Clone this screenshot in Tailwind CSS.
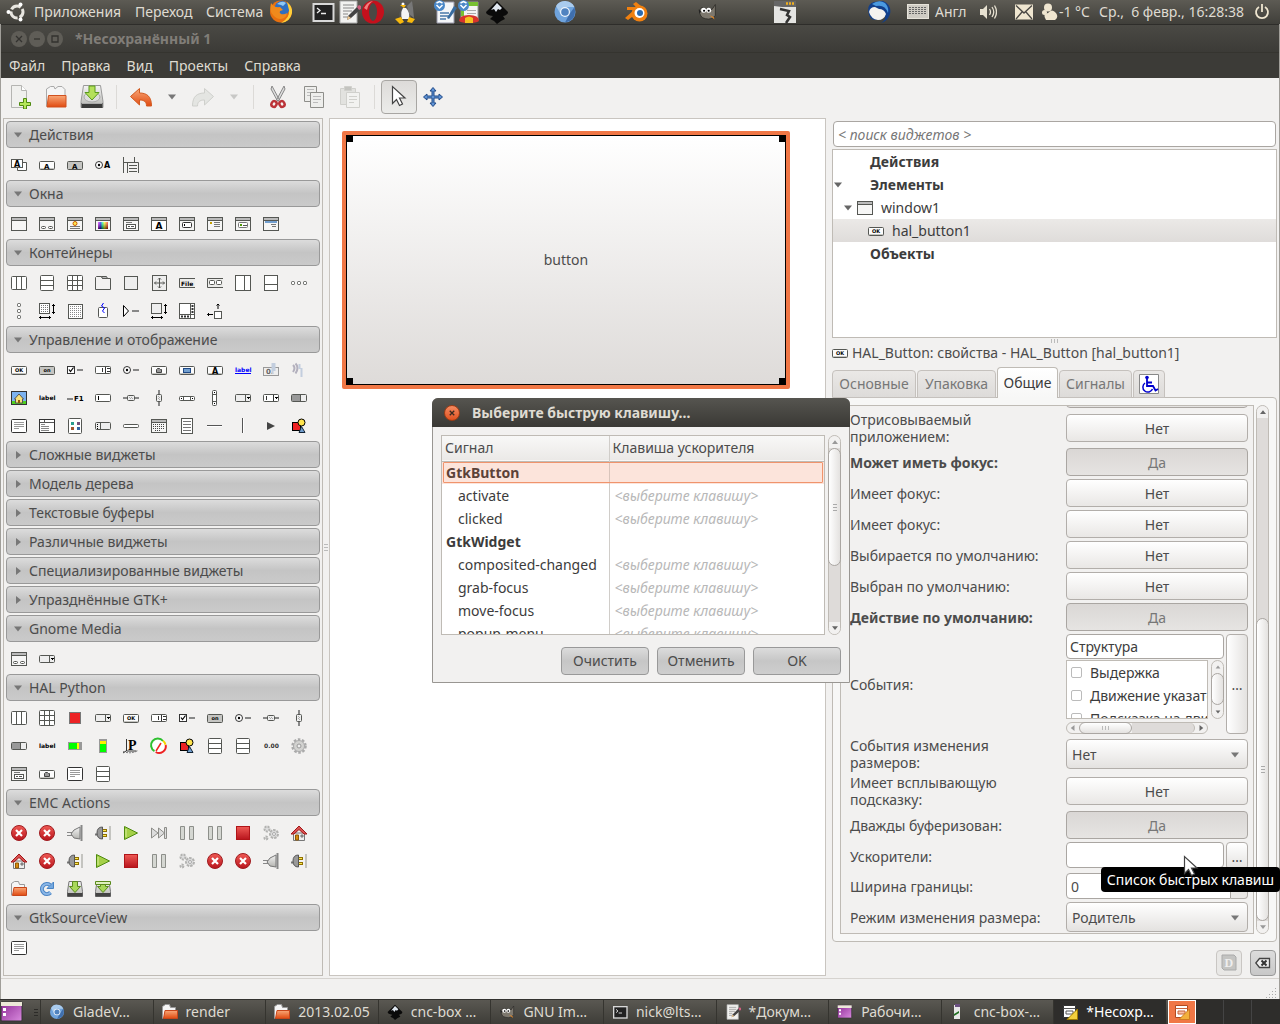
<!DOCTYPE html>
<html lang="ru">

<head>
    <meta charset="UTF-8">
    <meta name="viewport" content="width=device-width, initial-scale=1.0">
    <title>*Несохранённый 1</title>
    <script src="https://cdn.jsdelivr.net/npm/@tailwindcss/browser@4"></script>
</head>

<body class="relative flex h-screen min-h-[720px] flex-col overflow-hidden bg-[#f2f1f0] font-['Noto_Sans','Open_Sans',sans-serif] text-sm text-[#4c4c4c]">
    <!-- shared gradients and icon parts -->
    <svg class="absolute size-0" aria-hidden="true">
        <defs>
            <linearGradient id="rainbow"><stop offset="0" stop-color="#f0f"/><stop offset=".25" stop-color="#00f"/><stop offset=".45" stop-color="#0f8"/><stop offset=".65" stop-color="#ff0"/><stop offset="1" stop-color="#f00"/></linearGradient>
            <linearGradient id="dark" x2="0" y2="1"><stop offset="0" stop-color="#fff" stop-opacity=".4"/><stop offset="1" stop-color="#000" stop-opacity=".6"/></linearGradient>
            <linearGradient id="orange" x2="0" y2="1"><stop offset="0" stop-color="#f9a878"/><stop offset="1" stop-color="#e04a10"/></linearGradient>
            <linearGradient id="red" x2="0" y2="1"><stop offset="0" stop-color="#ef5a55"/><stop offset="1" stop-color="#b8141c"/></linearGradient>
            <linearGradient id="metal" x2="0" y2="1"><stop offset="0" stop-color="#f4f4f4"/><stop offset="1" stop-color="#b4b4b0"/></linearGradient>
            <linearGradient id="purple" x2="1" y2="1"><stop offset="0" stop-color="#8c2a94"/><stop offset="1" stop-color="#d98ade"/></linearGradient>
            <g id="win"><rect x=".5" y="1.5" width="15" height="13" fill="#f6f6f5" stroke="#555753"/><path d="M1 3h14" stroke="#bbb" stroke-width="2"/><path d="M1 4.5h14" stroke="#555753"/></g>
            <g id="btn"><rect x=".5" y="4.5" width="15" height="8" rx="1" fill="#fcfcfc" stroke="#555753"/><path d="M1 11.500h14" stroke="#c4c4c0"/></g>
            <g id="btnon"><rect x=".5" y="4.500" width="15" height="8" rx="1" fill="#c5c5c2" stroke="#555753"/></g>
            <g id="rows"><rect x="1.500" y=".5" width="13" height="15" rx="1" fill="#fff" stroke="#555753"/><path d="M2 5.500h12M2 10.500h12" stroke="#555753"/></g>
        </defs>
    </svg>

    <template id="icons"><svg>
        <!-- palette: actions -->
        <symbol id="action-group" viewBox="0 0 16 16"><path d="M4.500 5.500h11v8h-9v-3" fill="#fff" stroke="#555753"/><rect x=".5" y="2.500" width="11" height="8" fill="#fff" stroke="#555753"/><text x="3" y="9.500" font-size="8" font-weight="900">A</text></symbol>
        <symbol id="action" viewBox="0 0 16 16"><use href="#btn"/><text x="5" y="11.500" font-size="7" font-weight="900">A</text></symbol>
        <symbol id="toggle-action" viewBox="0 0 16 16"><use href="#btnon"/><text x="5" y="11.500" font-size="7" font-weight="900">A</text></symbol>
        <symbol id="radio-action" viewBox="0 0 16 16"><circle cx="4" cy="8" r="3.500" fill="#fff" stroke="#333"/><circle cx="4" cy="8" r="1.200"/><text x="9" y="11" font-size="8" font-weight="900">A</text></symbol>
        <symbol id="recent-action" viewBox="0 0 16 16"><path d="M.5 0v16M11.500 0v5M0 5.500h5M4.500 5.500h11V16M4.500 5.500V16M6 8.500h8M6 11.500h8M6 14.500h8" fill="none" stroke="#555753"/></symbol>

        <!-- palette: windows -->
        <symbol id="window" viewBox="0 0 16 16"><use href="#win"/></symbol>
        <symbol id="dialog" viewBox="0 0 16 16"><use href="#win"/><rect x="2.500" y="10.500" width="4" height="2" rx="1" fill="#fff" stroke="#555753"/><rect x="9.500" y="10.500" width="4" height="2" rx="1" fill="#fff" stroke="#555753"/></symbol>
        <symbol id="about" viewBox="0 0 16 16"><use href="#win"/><circle cx="8" cy="7.500" r="2" fill="#fce94f" stroke="#ce5c00"/><path d="M3 10.500h10M3 12.500h10" stroke="#777"/></symbol>
        <symbol id="color-dialog" viewBox="0 0 16 16"><use href="#win"/><rect x="3" y="6" width="10" height="7" fill="url(#rainbow)"/><rect x="3" y="6" width="10" height="7" fill="url(#dark)"/></symbol>
        <symbol id="file-dialog" viewBox="0 0 16 16"><use href="#win"/><path d="M3 6.500h6" stroke="#777"/><rect x="3.500" y="8.500" width="9" height="4" fill="#fff" stroke="#555753"/><path d="M5 10.500h2M8 10.500h3" stroke="#555"/></symbol>
        <symbol id="font-dialog" viewBox="0 0 16 16"><use href="#win"/><rect x="1" y="5" width="14" height="9" fill="#fff"/><text x="4.500" y="13" font-size="9" font-weight="900">A</text></symbol>
        <symbol id="input-dialog" viewBox="0 0 16 16"><use href="#win"/><rect x="3.500" y="6.500" width="9" height="5" rx="1" fill="#fff" stroke="#333"/><path d="M5.500 8v2" stroke="#000"/></symbol>
        <symbol id="message-dialog" viewBox="0 0 16 16"><use href="#win"/><rect x="3" y="6" width="2" height="2" fill="#c4a000"/><path d="M7 6.500h6M7 8.500h6M7 10.500h6" stroke="#777"/></symbol>
        <symbol id="recent-dialog" viewBox="0 0 16 16"><use href="#win"/><rect x="3.500" y="6.500" width="9" height="5" rx="1" fill="#fff" stroke="#777"/><rect x="5" y="8" width="2" height="2" fill="#4e9a06"/><path d="M8 9.500h4" stroke="#555"/></symbol>
        <symbol id="assistant" viewBox="0 0 16 16"><use href="#win"/><path d="M2 6h12" stroke="#729fcf" stroke-width="2"/><path d="M8 8.500h5M9 10.500h4" stroke="#777"/></symbol>

        <!-- palette: containers -->
        <symbol id="hbox" viewBox="0 0 16 16"><rect x=".5" y="1.500" width="15" height="13" rx="1" fill="#fff" stroke="#555753"/><path d="M5.500 2v12M10.500 2v12" stroke="#555753"/></symbol>
        <symbol id="vbox" viewBox="0 0 16 16"><use href="#rows"/></symbol>
        <symbol id="grid" viewBox="0 0 16 16"><rect x=".5" y=".5" width="15" height="15" rx="1" fill="#fff" stroke="#555753"/><path d="M5.500 1v14M10.500 1v14M1 5.500h14M1 10.500h14" stroke="#555753"/></symbol>
        <symbol id="notebook" viewBox="0 0 16 16"><path d="M.5 14.500v-12l1-1h5l1 2h8v11z" fill="#f2f1f0" stroke="#555753"/><path d="M6.500 1.500h5l1 2h-5z" fill="#bbb" stroke="#555753"/></symbol>
        <symbol id="frame" viewBox="0 0 16 16"><rect x="1.500" y="1.500" width="13" height="13" fill="#eee" stroke="#555753"/></symbol>
        <symbol id="aspect" viewBox="0 0 16 16"><rect x="1.500" y=".5" width="14" height="15" fill="#eee" stroke="#555753"/><path d="M8.500 3v10M3.500 8h10M7 4.500l1.500-1.500L10 4.500M7 11.500l1.500 1.500 1.500-1.500M5 6.500L3.500 8 5 9.500M12 6.500L13.500 8 12 9.500" fill="none" stroke="#555753"/></symbol>
        <symbol id="menubar" viewBox="0 0 16 16"><path d="M16 3.500H.5v9H16" fill="#ececea" stroke="#555753"/><text x="2" y="10.500" font-size="6" font-weight="bold">File</text></symbol>
        <symbol id="toolbar" viewBox="0 0 16 16"><path d="M16 3.500H.5v9H16" fill="#ececea" stroke="#555753"/><rect x="2.500" y="5.500" width="5" height="4" rx="1" fill="#fff" stroke="#555753"/><rect x="9.500" y="5.500" width="5" height="4" rx="1" fill="#fff" stroke="#555753"/></symbol>
        <symbol id="hpaned" viewBox="0 0 16 16"><rect x=".5" y=".5" width="15" height="15" fill="#fff" stroke="#555753"/><path d="M9.500 1v14" stroke="#555753"/></symbol>
        <symbol id="vpaned" viewBox="0 0 16 16"><rect x="1.500" y=".5" width="13" height="15" fill="#fff" stroke="#555753"/><path d="M2 9.500h12" stroke="#555753"/></symbol>
        <symbol id="hbuttons" viewBox="0 0 16 16"><g fill="#fff" stroke="#555753"><rect x=".5" y="6.500" width="3" height="3" rx="1"/><rect x="6.500" y="6.500" width="3" height="3" rx="1"/><rect x="12.500" y="6.500" width="3" height="3" rx="1"/></g></symbol>
        <symbol id="vbuttons" viewBox="0 0 16 16"><g fill="#fff" stroke="#555753"><rect x="6.500" y=".5" width="3" height="3" rx="1"/><rect x="6.500" y="6.500" width="3" height="3" rx="1"/><rect x="6.500" y="12.500" width="3" height="3" rx="1"/></g></symbol>
        <symbol id="layout" viewBox="0 0 16 16"><rect x=".5" y=".5" width="10" height="10" fill="#fff" stroke="#555753"/><path d="M2 2.500h8M2 4.500h8M2 6.500h8M2 8.500h8" stroke="#777" stroke-dasharray="1 1"/><path d="M14.500 1v10M0 14.500h12M13 2.500h3M13 9.500h3M1.500 13v3M10.500 13v3" stroke="#000"/></symbol>
        <symbol id="fixed" viewBox="0 0 16 16"><rect x="1.500" y="1.500" width="14" height="14" fill="#fff" stroke="#555753"/><path d="M3 3.500h11M3 5.500h11M3 7.500h11M3 9.500h11M3 11.500h11M3 13.500h11" stroke="#888" stroke-dasharray="1 1"/></symbol>
        <symbol id="eventbox" viewBox="0 0 16 16"><rect x="3.500" y="4.500" width="9" height="10" rx="1" fill="#fff" stroke="#555753"/><path d="M8.500 0L6.500 3l3 2-2 3 2 2" fill="none" stroke="#00f"/></symbol>
        <symbol id="expander" viewBox="0 0 16 16"><path d="M.5 2.500v11l5-5.500z" fill="#fff" stroke="#000"/><path d="M9 8h7" stroke="#888" stroke-width="2"/></symbol>
        <symbol id="viewport" viewBox="0 0 16 16"><rect x=".5" y=".5" width="10" height="10" fill="#eee" stroke="#555753"/><path d="M14.500 1v10M0 14.500h12M13 2.500h3M13 9.500h3M1.500 13v3M10.500 13v3" stroke="#000"/></symbol>
        <symbol id="scrolled" viewBox="0 0 16 16"><rect x=".5" y=".5" width="15" height="15" fill="#fff" stroke="#555753"/><path d="M11.500 1v15M1 11.500h15" stroke="#555753"/><path d="M13.500 2v9M2 13.500h9" stroke="#333" stroke-width="2" stroke-dasharray="2 1"/></symbol>
        <symbol id="alignment" viewBox="0 0 16 16"><rect x="7.500" y="8.500" width="7" height="7" fill="#fff" stroke="#555753"/><path d="M11 6V1M9.500 2.500L11 1l1.500 1.500M6 11.500H.5M2 10L.5 11.500 2 13" fill="none" stroke="#000"/></symbol>

        <!-- palette: controls -->
        <symbol id="ok" viewBox="0 0 16 16"><use href="#btn"/><text x="8" y="10" text-anchor="middle" font-size="5" font-weight="900">OK</text></symbol>
        <symbol id="on" viewBox="0 0 16 16"><use href="#btnon"/><text x="8" y="10" text-anchor="middle" font-size="5" font-weight="900">on</text></symbol>
        <symbol id="check" viewBox="0 0 16 16"><rect x=".5" y="4.500" width="7" height="7" fill="#fff" stroke="#333"/><path d="M2 7.500l1.500 2L6.500 5.500" fill="none" stroke="#000" stroke-width="1.200"/><path d="M10 8h6" stroke="#888" stroke-width="2"/></symbol>
        <symbol id="spin" viewBox="0 0 16 16"><rect x=".5" y="4.500" width="15" height="7" rx="1" fill="#fff" stroke="#555753"/><path d="M10.500 5v6M7.500 6v4M12 6.500h3M12 9.500h3" stroke="#333"/></symbol>
        <symbol id="radio" viewBox="0 0 16 16"><circle cx="4" cy="8" r="3.500" fill="#fff" stroke="#333"/><circle cx="4" cy="8" r="1.200"/><path d="M10 8h6" stroke="#888" stroke-width="2"/></symbol>
        <symbol id="file-button" viewBox="0 0 16 16"><use href="#btn"/><path d="M5.500 10.500v-3l1-1h2l1 1h1v3z" fill="#999" stroke="#444"/></symbol>
        <symbol id="color-button" viewBox="0 0 16 16"><use href="#btn"/><rect x="4.500" y="6.500" width="7" height="4" fill="#729fcf" stroke="#204a87"/></symbol>
        <symbol id="font-button" viewBox="0 0 16 16"><use href="#btn"/><text x="5" y="11.500" font-size="8" font-weight="900">A</text></symbol>
        <symbol id="link" viewBox="0 0 16 16"><text x="0" y="10" font-size="6" font-weight="900" fill="#00f">label</text><path d="M0 11.500h16" stroke="#00f"/></symbol>
        <symbol id="scale-button" viewBox="0 0 16 16"><rect x=".5" y="5.500" width="15" height="8" fill="#eee" stroke="#999"/><text x="3" y="12" font-size="7" font-weight="bold" fill="#666">0.</text><path d="M9.500 1v11M11.500 1v8" stroke="#c3cede" stroke-width="2"/></symbol>
        <symbol id="volume-button" viewBox="0 0 16 16"><path d="M2 3q3 3 0 7M4.500 1.500q4 4 0 10" fill="none" stroke="#b3b0bd" stroke-width="2"/><path d="M10.500 6v9M8.500 2v5" stroke="#c3cede" stroke-width="2"/></symbol>
        <symbol id="image" viewBox="0 0 16 16"><rect x=".5" y="1.500" width="15" height="13" fill="#7cb2ef" stroke="#333"/><path d="M1 11h14v3H1z" fill="#4ed01e"/><path d="M3.500 9L8 4l4.500 5h-1v4h-7V9z" fill="#f7e17c" stroke="#555"/><path d="M7 10h2v3H7z" fill="#8f5902"/></symbol>
        <symbol id="label" viewBox="0 0 16 16"><text x="0" y="10" font-size="6" font-weight="900" fill="#000">label</text></symbol>
        <symbol id="accel-label" viewBox="0 0 16 16"><path d="M0 9h6" stroke="#888" stroke-width="2"/><text x="7" y="11" font-size="7" font-weight="900" fill="#000">F1</text></symbol>
        <symbol id="entry" viewBox="0 0 16 16"><rect x=".5" y="4.500" width="15" height="7" rx="1" fill="#fff" stroke="#555753"/><path d="M3.500 6v4" stroke="#000"/></symbol>
        <symbol id="hscale" viewBox="0 0 16 16"><path d="M0 8h16" stroke="#888" stroke-width="2"/><rect x="4.500" y="5.500" width="7" height="5" rx="1" fill="#eee" stroke="#555753"/><path d="M6 7.500h4M7 8.500h3" stroke="#aaa" stroke-dasharray="1 1"/></symbol>
        <symbol id="vscale" viewBox="0 0 16 16"><path d="M8 0v16" stroke="#888" stroke-width="2"/><rect x="5.500" y="4.500" width="5" height="7" rx="1" fill="#eee" stroke="#555753"/><path d="M7.500 6v4M8.500 7v3" stroke="#aaa" stroke-dasharray="1 1"/></symbol>
        <symbol id="hscroll" viewBox="0 0 16 16"><rect x=".5" y="6.500" width="15" height="4" rx="1" fill="#fff" stroke="#555753"/><path d="M4.500 7v3M11.500 7v3" stroke="#555753"/><path d="M2 8.500h1M13 8.500h1" stroke="#000"/></symbol>
        <symbol id="vscroll" viewBox="0 0 16 16"><rect x="5.500" y=".5" width="4" height="15" rx="1" fill="#fff" stroke="#555753"/><path d="M6 4.500h3M6 11.500h3" stroke="#555753"/><path d="M7.500 2v1M7.500 13v1" stroke="#000"/></symbol>
        <symbol id="combo" viewBox="0 0 16 16"><rect x=".5" y="4.500" width="15" height="7" rx="1" fill="#eee" stroke="#555753"/><path d="M10.500 5v6" stroke="#555753"/><path d="M12 7.500h3M13 8.500h1" stroke="#000"/></symbol>
        <symbol id="combo-entry" viewBox="0 0 16 16"><rect x=".5" y="4.500" width="15" height="7" rx="1" fill="#fff" stroke="#555753"/><path d="M10.500 5v6M3.500 6v4" stroke="#333"/><path d="M12 7.500h3M13 8.500h1" stroke="#000"/></symbol>
        <symbol id="progress" viewBox="0 0 16 16"><rect x=".5" y="4.500" width="15" height="7" rx="1" fill="#eee" stroke="#555753"/><path d="M1 5h8v6H1z" fill="#999"/><path d="M9.500 5v6" stroke="#555753"/></symbol>
        <symbol id="textview" viewBox="0 0 16 16"><rect x=".5" y="1.500" width="15" height="13" rx="1" fill="#fff" stroke="#333"/><path d="M3 4.500h10M3 6.500h10M3 8.500h10M3 10.500h5" stroke="#999"/></symbol>
        <symbol id="treeview" viewBox="0 0 16 16"><rect x=".5" y="1.500" width="15" height="13" fill="#fff" stroke="#333"/><path d="M1 4.500h14M5.500 2v3" stroke="#555"/><path d="M2 6.500h4M2 8.500h8M2 10.500h8M2 12.500h8" stroke="#888"/></symbol>
        <symbol id="iconview" viewBox="0 0 16 16"><rect x="1.500" y=".5" width="13" height="15" rx="1" fill="#fff" stroke="#555753"/><path d="M4 4h3v3H4z" fill="#2a9d8f"/><path d="M10 4h3v3h-3z" fill="#75507b"/><path d="M4 9h3v3H4z" fill="#a0522d"/><path d="M10 9h3v3h-3z" fill="#3465a4"/></symbol>
        <symbol id="handle" viewBox="0 0 16 16"><rect x=".5" y="4.500" width="15" height="7" rx="1" fill="#eee" stroke="#555753"/><path d="M5.500 5v6" stroke="#555753"/><path d="M2.500 6v5" stroke="#000" stroke-dasharray="1 1"/></symbol>
        <symbol id="statusbar" viewBox="0 0 16 16"><rect x=".5" y="6.500" width="15" height="3" rx="1" fill="#fff" stroke="#555753"/></symbol>
        <symbol id="calendar" viewBox="0 0 16 16"><use href="#win"/><path d="M2 6.500h12M2 8.500h12M2 10.500h12M4 12.500h6" stroke="#444" stroke-dasharray="1 1"/></symbol>
        <symbol id="list" viewBox="0 0 16 16"><rect x="2.500" y=".5" width="11" height="15" fill="#fff" stroke="#555753"/><path d="M4 3.500h8M4 6.500h8M4 9.500h8M4 12.500h8" stroke="#777"/></symbol>
        <symbol id="hsep" viewBox="0 0 16 16"><path d="M0 7.500h15" stroke="#555"/><path d="M0 8.500h15" stroke="#fff"/></symbol>
        <symbol id="vsep" viewBox="0 0 16 16"><path d="M7.500 0v15" stroke="#555"/><path d="M8.500 0v15" stroke="#fff"/></symbol>
        <symbol id="arrow" viewBox="0 0 16 16"><path d="M4 4l8 4-8 4z" fill="#444"/></symbol>
        <symbol id="drawing" viewBox="0 0 16 16"><rect x="1.500" y="4.500" width="8" height="8" fill="#e22" stroke="#000"/><circle cx="10.500" cy="4.500" r="3.500" fill="#ffe44d" stroke="#000"/><path d="M10.500 8.500l3.500 6H8z" fill="#729fcf" stroke="#123"/></symbol>

        <!-- palette: HAL -->
        <symbol id="led" viewBox="0 0 16 16"><rect x="2.500" y="2.500" width="11" height="11" fill="#ec2224" stroke="#777"/></symbol>
        <symbol id="hbar" viewBox="0 0 16 16"><rect x="1" y="4" width="14" height="8" fill="#999"/><path d="M2 5h8v6H2z" fill="#0f0"/><path d="M10 5h2v6h-2z" fill="#ff0"/></symbol>
        <symbol id="vbar" viewBox="0 0 16 16"><rect x="4" y="1" width="8" height="14" fill="#999"/><path d="M5 3h6v3H5z" fill="#fe0"/><path d="M5 6h6v8H5z" fill="#0f0"/></symbol>
        <symbol id="plot" viewBox="0 0 16 16"><path d="M3.500 1v12h10M3 13l-3 2" fill="none" stroke="#333"/><path d="M0 13.500q8 3 15-1" fill="none" stroke="#777" stroke-dasharray="2 1"/><text x="5" y="12" font-size="14" font-weight="bold" fill="#000" font-family="Liberation Serif">P</text></symbol>
        <symbol id="meter" viewBox="0 0 16 16"><circle cx="8" cy="8" r="6.500" fill="#fff"/><path d="M3.500 13A6.700 6.700 0 1 1 12 3" fill="none" stroke="#2ec02e" stroke-width="2"/><path d="M12 2.800a6.700 6.700 0 0 1 2.500 4" fill="none" stroke="#f5d400" stroke-width="2"/><path d="M14.700 7a6.700 6.700 0 0 1-10 7" fill="none" stroke="#e22" stroke-width="2"/><path d="M5 13l5-8" stroke="#e22" stroke-width="1.500"/></symbol>
        <symbol id="hal-label" viewBox="0 0 16 16"><text x="1" y="10" font-size="6" font-weight="900" fill="#333">0.00</text></symbol>
        <symbol id="gear" viewBox="0 0 16 16"><circle cx="8" cy="8" r="6.500" fill="none" stroke="#aaa" stroke-width="2.500" stroke-dasharray="2.500 1.600"/><circle cx="8" cy="8" r="5.500" fill="#d2d2d0" stroke="#aaa"/><circle cx="8" cy="8" r="2" fill="#eee" stroke="#999"/></symbol>

        <!-- palette: EMC -->
        <symbol id="estop" viewBox="0 0 16 16"><circle cx="8" cy="8" r="7.500" fill="url(#red)" stroke="#a01c20"/><path d="M5 5l6 6M11 5l-6 6" stroke="#fff" stroke-width="2.200"/></symbol>
        <symbol id="unplug" viewBox="0 0 16 16"><path d="M0 7.500h5M0 10.500h6" stroke="#888"/><path d="M4 9l3-4 6-3v12l-6-1z" fill="url(#metal)" stroke="#777"/><path d="M14.500 0v16" stroke="#888" stroke-width="2"/></symbol>
        <symbol id="plug" viewBox="0 0 16 16"><path d="M0 9.500h3" stroke="#777" stroke-width="2"/><path d="M7.500 2v12Q2 14 2 8t5.500-6z" fill="#999" stroke="#555"/><path d="M8 5.500h4M8 10.500h4" stroke="#907000" stroke-width="3"/><path d="M8 5.500h3M8 10.500h3" stroke="#fce94f"/><path d="M15 1v14" stroke="#c4c4c0" stroke-width="2"/></symbol>
        <symbol id="play" viewBox="0 0 16 16"><path d="M1.500 1.500v13l13-6.500z" fill="#a5d048" stroke="#4e8a10"/><path d="M3 4v8" stroke="#d8f09c"/></symbol>
        <symbol id="step" viewBox="0 0 16 16"><path d="M.5 3v10l6.500-5zM7.500 3v10l6-5zM13.500 2.500h2v11h-2z" fill="#ddd" stroke="#8c8c88"/></symbol>
        <symbol id="pause" viewBox="0 0 16 16"><path d="M1.500 1.500h4v13h-4zM10.500 1.500h4v13h-4z" fill="#d5d7d2" stroke="#8d8f8a"/></symbol>
        <symbol id="stop" viewBox="0 0 16 16"><rect x="1.500" y="1.500" width="13" height="13" fill="url(#red)" stroke="#b01418"/></symbol>
        <symbol id="gears" viewBox="0 0 16 16"><g fill="#ddd" stroke="#b2b2b0" stroke-width="2"><circle cx="4" cy="4" r="2.500" stroke-dasharray="2 1"/><circle cx="11" cy="9" r="4" stroke-dasharray="2.500 1"/><circle cx="3" cy="13" r="1.500" stroke-dasharray="2 1"/></g><circle cx="11" cy="9" r="1.500" fill="#f5f5f5" stroke="#aaa"/></symbol>
        <symbol id="home" viewBox="0 0 16 16"><path d="M2.500 8h11v7.500h-11z" fill="#eee" stroke="#777"/><path d="M4.500 10h3v5h-3z" fill="#d98c10" stroke="#8f5902"/><path d="M10 10h2v2h-2z" fill="#aaa" stroke="#777"/><path d="M0 9l8-8 8 8h-3L8 4.500 3 9z" fill="#d95050" stroke="#a01818"/></symbol>
        <symbol id="open" viewBox="0 0 16 16"><path d="M.5 14.500v-12l3-2h4l1 3h5v4" fill="#f5f5f5" stroke="#999"/><path d="M3 6.500h12.500v8h-14z" fill="url(#orange)" stroke="#c8461a"/></symbol>
        <symbol id="reload" viewBox="0 0 16 16"><path d="M11.500 11.500A5 5 0 1 1 11 4" fill="none" stroke="#4a84c4" stroke-width="4"/><path d="M11.500 11.500A5 5 0 1 1 11 4" fill="none" stroke="#8cb8e8" stroke-width="2"/><path d="M14.500 1v6.500H8z" fill="#73a8e0" stroke="#4a84c4"/></symbol>
        <symbol id="save" viewBox="0 0 16 16"><path d="M2 .5h12l1.500 10v5H.5v-5z" fill="url(#metal)" stroke="#777"/><path d="M.5 12h15v3.500H.5z" fill="#444"/><path d="M5.500.5h5v5h3L8 11.500 2.500 5.500h3z" fill="#a8d85a" stroke="#5a8a1c"/></symbol>
        <symbol id="save-as" viewBox="0 0 16 16"><path d="M2 .5h12l1.500 10v5H.5v-5z" fill="url(#metal)" stroke="#777"/><path d="M.5 12h15v3.500H.5z" fill="#444"/><path d="M.5.500h15v3H.5z" fill="#e0f0c0" stroke="#5a8a1c"/><path d="M5.500 3.500h5v2h3L8 11.500 2.500 5.500h3z" fill="#a8d85a" stroke="#5a8a1c"/></symbol>

        <!-- toolbar -->
        <symbol id="tb-new" viewBox="0 0 24 24"><path d="M3.500.5h10l5 5v17h-15z" fill="#f0f0ee" stroke="#b5b5b2"/><path d="M13.500.5v5h5" fill="#fff" stroke="#b5b5b2"/><path d="M15.500 13.500h3v4h4v3h-4v3.500h-3v-3.500h-4v-3h4z" fill="#b4e65a" stroke="#4e8a10"/></symbol>
        <symbol id="tb-open" viewBox="0 0 24 24"><path d="M2.500 21.500V4l4-2.500h3.500l1 2.500 3-2.500h4l3 3v6" fill="#f5f5f5" stroke="#aaa"/><path d="M4.500 10.500h17.500v11.500H3z" fill="url(#orange)" stroke="#d0511f"/></symbol>
        <symbol id="tb-save" viewBox="0 0 24 24"><path d="M3.500.5h17l2.500 16v6H1v-6z" fill="url(#metal)" stroke="#999"/><path d="M1.500 18h21v5h-21z" fill="#3a3a3a"/><path d="M2 18.500h20" stroke="#aaa"/><ellipse cx="12" cy="12" rx="8" ry="5" fill="#ddd" stroke="#aaa"/><path d="M9 1h6v6.500h4l-7 7.500-7-7.500h4z" fill="#b4e05a" stroke="#5a9a1c"/></symbol>
        <symbol id="tb-undo" viewBox="0 0 24 24"><path d="M1.500 11.500l9-8v4.500c7 0 12 3 12 13h-5c0-4-2-6-7-6v5z" fill="url(#orange)" stroke="#d25a20"/></symbol>
        <symbol id="tb-redo" viewBox="0 0 24 24"><path d="M22.500 11.500l-9-8v4.500c-7 0-12 3-12 13h5c0-4 2-6 7-6v5z" fill="#e4e5e2" stroke="#cfd0cc"/></symbol>
        <symbol id="tb-cut" viewBox="0 0 24 24"><path d="M6 1l7.500 14-2 1L5 4zM18 1l-7.500 14 2 1L19 4z" fill="#ddd" stroke="#888"/><ellipse cx="8" cy="19" rx="2.500" ry="3" transform="rotate(25 8 19)" fill="none" stroke="#bb3338" stroke-width="2.500"/><ellipse cx="16" cy="19" rx="2.500" ry="3" transform="rotate(-25 16 19)" fill="none" stroke="#bb3338" stroke-width="2.500"/></symbol>
        <symbol id="tb-copy" viewBox="0 0 24 24"><g fill="#eeeeec" stroke="#8e8e8a"><path d="M2.500 1.500h12v15h-12z"/><path d="M5 4.500h7M5 7.500h4M5 10.500h4" stroke="#bbb"/><path d="M8.500 7.500h13v15h-13z"/><path d="M11 11.500h8M11 14.500h8M11 17.500h5" stroke="#bbb"/></g></symbol>
        <symbol id="tb-paste" viewBox="0 0 24 24"><g fill="#e2e2df" stroke="#d0d0cc"><path d="M2.500 3.500h15v16h-15z"/><path d="M6.500 1.500h7v4h-7z" fill="#c4c4c0"/><path d="M8.500 7.500h13v15h-13z" fill="#f2f2f0"/><path d="M11 11.500h8M11 14.500h8M11 17.500h5"/></g></symbol>
        <symbol id="cursor" viewBox="0 0 16 24"><path d="M1.500 1.500v17l4-4 3 6 3-1.500-3-6h5.500z" fill="#fff" stroke="#444" stroke-width="1.200"/></symbol>
        <symbol id="tb-move" viewBox="0 0 20 20"><path d="M10 .5L13 4h-2v5h5V7l3.500 3-3.500 3v-2h-5v5h2l-3 3.500L7 16h2v-5H4v2L.5 10 4 7v2h5V4H7z" fill="#5f92d4" stroke="#204a87"/></symbol>
        <symbol id="down" viewBox="0 0 10 8"><path d="M1 1.500h8L5 6.500z" fill="currentColor"/></symbol>
        <symbol id="right" viewBox="0 0 10 8"><path d="M3 0l5 4-5 4z" fill="currentColor"/></symbol>
        <symbol id="left" viewBox="0 0 10 8"><path d="M7 0L2 4l5 4z" fill="currentColor"/></symbol>
        <symbol id="up" viewBox="0 0 10 8"><path d="M1 6.500h8L5 1.500z" fill="currentColor"/></symbol>

        <!-- panel and taskbar -->
        <symbol id="ubuntu" viewBox="0 0 20 20"><circle cx="11" cy="10" r="6" fill="none" stroke="#e8e6e0" stroke-width="3" stroke-dasharray="10.500 2" stroke-dashoffset="4"/><circle cx="2.500" cy="10" r="2" fill="#fff"/><circle cx="14.500" cy="2.500" r="2" fill="#fff"/><circle cx="14.500" cy="17.500" r="2" fill="#fff"/></symbol>
        <symbol id="firefox" viewBox="0 0 24 24"><circle cx="12" cy="11.500" r="11" fill="#e8700f"/><circle cx="13" cy="8.500" r="7.500" fill="#2f6fc0"/><path d="M8 4q5-4 9-1l-3 3-2-1z" fill="#8fc8f4"/><path d="M2 3q-2 8 2 12 5 6 11 3 3-2 3-5-3 2-6 1-2-1-1-3l3-1-3-3q-6 1-9-4z" fill="#f08a1c"/><path d="M18 2q6 5 5 11-2 9-11 10 9-5 8-13z" fill="#ffcf3a"/></symbol>
        <symbol id="terminal" viewBox="0 0 24 24"><rect x="2.500" y="4" width="20" height="17" fill="#222" stroke="#d8d8d8" stroke-width="2"/><path d="M6 8l3 2.500L6 13M10 13.500h5" fill="none" stroke="#eee" stroke-width="1.300"/></symbol>
        <symbol id="gedit" viewBox="0 0 24 24"><path d="M3 1h17v22H3z" fill="#f2f2f0" stroke="#aaa"/><path d="M6 5h11M6 8h11M6 11h9M6 14h5M6 17h5" stroke="#888"/><path d="M10 20l1-4L21 6l3 3-10 9z" fill="#444"/><path d="M10 20l1-4 3 2z" fill="#f0c890"/><path d="M20 7l2-2 2 1v3l-2 1z" fill="#d06080"/></symbol>
        <symbol id="opera" viewBox="0 0 24 24"><ellipse cx="12" cy="12" rx="11" ry="11.500" fill="#c4101c"/><ellipse cx="12" cy="12" rx="4" ry="9" fill="#4a4844"/><path d="M3 8q3-6 9-7-5 3-6 9z" fill="#f08080"/></symbol>
        <symbol id="penguin" viewBox="0 0 24 24"><path d="M9 2q3-2 5 1l1 5q4 5 3 11H7Q5 12 9 8z" fill="#555"/><path d="M14 6l5-5 1 7 1 10-5-4z" fill="#777"/><path d="M10 8q-3 5-1 11h7q1-7-3-11z" fill="#f4f4f4"/><circle cx="10" cy="4" r="1.500" fill="#fff"/><path d="M7 5h6l-2 3zM2 19l6-2 3 5-4 2zM22 19l-6-2-2 5 5 1z" fill="#f8b90c"/></symbol>
        <symbol id="writer" viewBox="0 0 24 24"><path d="M4 2h17v21H4z" fill="#f4f6f8" stroke="#99a"/><path d="M7 13h9M7 16h9M7 19h6" stroke="#4878a8" stroke-width="1.500"/><circle cx="6.500" cy="5.500" r="5.500" fill="#4a88c8"/><path d="M3.500 5l3 3 3-3M3.500 3l3-1.500 3 1.500" fill="none" stroke="#fff" stroke-width="1.500"/><path d="M14 18l7-12 3 2-8 11z" fill="#386ca0"/></symbol>
        <symbol id="impress" viewBox="0 0 24 24"><path d="M4 2h17v18H4z" fill="#f4f4f4" stroke="#999"/><path d="M8 2h13v4H8z" fill="#78c032"/><path d="M10 10.500h9M10 13.500h9" stroke="#aaa"/><path d="M4 10h3v6H4z" fill="#78c032"/><path d="M2 21q0-6 10-6t10 6q-3 2-10 2T2 21z" fill="#d8342c"/><path d="M8 18q4-3 8 0v5H8z" fill="#f4c020"/><circle cx="6.500" cy="5.500" r="5.500" fill="#4a88c8"/><path d="M3.500 5l3 3 3-3M3.500 3l3-1.500 3 1.500" fill="none" stroke="#fff" stroke-width="1.500"/></symbol>
        <symbol id="inkscape" viewBox="0 0 24 24"><path d="M12 1l11 11q0 3-5 4l2 3-4 2-4 3-3-3-4-2 3-3q-7-1-7-4z" fill="#0a0a0a"/><path d="M12 3l5 5-2 2-2-1-2 3-2-3-3 1z" fill="#dfe6ef"/></symbol>
        <symbol id="chromium" viewBox="0 0 24 24"><circle cx="12" cy="12" r="10.500" fill="#6fa3dc"/><path d="M12 7h9.500A10.500 10.500 0 0 0 3 6l4.500 8z" fill="#a9cbee"/><path d="M12 22.500L16.500 14 21.500 7q3 13-9.500 15.500z" fill="#3f6fae"/><circle cx="12" cy="12" r="5" fill="#eef4fb"/><circle cx="12" cy="12" r="3.800" fill="#5083c0"/></symbol>
        <symbol id="blender" viewBox="0 0 24 24"><path d="M0 18l9-8H2V7h9L8 4l3-2 10 8-8 9-6-2-4 3z" fill="#f08010"/><circle cx="14.500" cy="13.500" r="8" fill="#f08010"/><circle cx="14.500" cy="13" r="5" fill="#fff"/><circle cx="15" cy="13" r="3" fill="#2a6ab0"/></symbol>
        <symbol id="gimp" viewBox="0 0 24 24"><path d="M3 10q2-5 6-2l9 1 4-6v13q-4 6-12 4-7-1-7-10z" fill="#7d786e" stroke="#2c2b28"/><circle cx="8" cy="10" r="3" fill="#fff"/><circle cx="14" cy="10" r="3" fill="#fff"/><circle cx="8.500" cy="10.500" r="1.300"/><circle cx="14" cy="10.500" r="1.300"/><path d="M2 9l3 2-2 3z" fill="#222"/><path d="M15 16l5 2 1 3z" fill="#f08a20"/></symbol>
        <symbol id="xapp" viewBox="0 0 24 24"><path d="M1 1h22v22H1z" fill="#e4e4e2"/><path d="M1 1h22v6H9L1 6z" fill="#666"/><path d="M13 3.500h8" stroke="#f0b020" stroke-width="2.500" stroke-dasharray="2 1"/><path d="M7 9l9 2-2 4 3 2-4 6" fill="none" stroke="#333" stroke-width="2.500"/></symbol>
        <symbol id="thunderbird" viewBox="0 0 24 24"><path d="M2 15Q-1 4 7 2l9-1q9 4 7 13-3 8-9 9 5-3 4-7L8 20q-5-1-6-5z" fill="#123f8a"/><path d="M5 4q7-5 13-1 4 4 3 10-3-9-12-7z" fill="#4a9ae0"/><path d="M2 12q1-5 6-5l4 2q5 0 7 5-2 6-8 6-7-1-9-8z" fill="#f4f2ee"/></symbol>
        <symbol id="keyboard" viewBox="0 0 22 16"><rect x=".5" y=".5" width="21" height="14" fill="#cfccc4" stroke="#e6e3da"/><path d="M2 3.500h18M2 5.500h18M2 7.500h18M2 9.500h18" stroke="#666" stroke-dasharray="2 1"/></symbol>
        <symbol id="volume" viewBox="0 0 18 16"><path d="M1 5h3l4-4v14l-4-4H1z" fill="#e6e0d0"/><path d="M10.500 5q2 3 0 6M13 3q3.500 5 0 10M15.500 1.500q4 6.500 0 13" fill="none" stroke="#e6e0d0" stroke-width="1.300"/></symbol>
        <symbol id="mail" viewBox="0 0 18 16"><rect width="18" height="15" y=".5" fill="#efe6d0"/><path d="M1 1.500L9 9l8-7.500M1 15l6-7M17 15l-6-7" fill="none" stroke="#4a4844" stroke-width="1.300"/></symbol>
        <symbol id="weather" viewBox="0 0 18 18"><circle cx="7" cy="4.500" r="4" fill="#efe6d0"/><path d="M5 17q-4-6 2-7 4-5 8 0 3 4-1 7z" fill="#efe6d0"/><circle cx="3.500" cy="9.500" r="2.500" fill="#efe6d0"/></symbol>
        <symbol id="power" viewBox="0 0 16 16"><path d="M5 3a6 6 0 1 0 6 0M8 0v8" fill="none" stroke="#efe6d0" stroke-width="1.800"/></symbol>
        <symbol id="desktop" viewBox="0 0 24 22"><rect x="1" y="1" width="21" height="19" rx="1" fill="url(#purple)" stroke="#333"/><path d="M1 1h21v4H1z" fill="#ece9d8"/><path d="M3 7h3v3H3zM3 12h3v3H3z" fill="#fff"/></symbol>
        <symbol id="app-cnc" viewBox="0 0 16 16"><path d="M4 1h6v14H4z" fill="#e8e8e8"/><path d="M5 0h5v3H5z" fill="#6a5080"/><path d="M4 10l5-3v2l-5 3z" fill="#207020"/></symbol>
        <symbol id="glade" viewBox="0 0 16 16"><path d="M1.500 1.500h12v12h-12z" fill="#fff" stroke="#333"/><path d="M1.500 4.500h12M4 7h7v3H4z" fill="none" stroke="#555"/><path d="M15.500 5v10.500H5z" fill="#f2cf3c" stroke="#a07c00"/></symbol>
        <symbol id="glade-orange" viewBox="0 0 16 16"><path d="M1.500 1.500h12v12h-12z" fill="#fff" stroke="#b04a20"/><path d="M1.500 4.500h12M4 7h7v3H4z" fill="#f9c0a4" stroke="#c8643c"/><path d="M15.500 5v10.500H5z" fill="#f2b03c" stroke="#d07c20"/></symbol>
        <symbol id="wheelchair" viewBox="0 0 20 20"><path d="M.5.500h19v19H.5z" fill="#fff" stroke="#888"/><circle cx="8" cy="3.500" r="1.800" fill="#0000cd"/><path d="M8 5v7h6l2.500 4.500L19 15M8 8.500h5" fill="none" stroke="#0000cd" stroke-width="1.800"/><path d="M6 9a5 5 0 1 0 7.500 6" fill="none" stroke="#0000cd" stroke-width="1.500"/></symbol>
        <symbol id="book" viewBox="0 0 20 20"><path d="M3 2h12l2 2v13H5l-2-2z" fill="#c4c4c2" stroke="#aaa"/><text x="5.500" y="14" font-size="12" font-weight="bold" fill="#eee" font-family="Liberation Serif">D</text></symbol>
        <symbol id="clear" viewBox="0 0 16 12"><path d="M.8 6L4.500 1.500h10v9h-10z" fill="#eee" stroke="#444" stroke-width="1.300"/><path d="M6.500 3.500l5 5M11.500 3.500l-5 5" stroke="#333" stroke-width="2"/></symbol>
    </svg></template>

    <!-- desktop panel -->
    <header class="flex h-6 shrink-0 items-center bg-linear-to-b from-[#5d5b54] to-[#403f3a] text-[#dfdbd2]">
        <svg class="ml-1.5 size-5"><use href="#ubuntu"/></svg>
        <nav class="ml-2 flex gap-2.5">
            <a href="#" class="w-[91px]">Приложения</a>
            <a href="#" class="w-[61px]">Переход</a>
            <a href="#" class="w-[59px]">Система</a>
        </nav>
        <div class="ml-1 flex items-center">
            <svg class="size-6"><use href="#firefox"/></svg>
            <svg class="ml-[18px] size-6"><use href="#terminal"/></svg>
            <svg class="ml-0.5 size-6"><use href="#gedit"/></svg>
            <svg class="size-6"><use href="#opera"/></svg>
            <svg class="ml-2 size-6"><use href="#penguin"/></svg>
            <svg class="ml-4 size-6"><use href="#writer"/></svg>
            <svg class="size-6"><use href="#impress"/></svg>
            <svg class="ml-1 size-6"><use href="#inkscape"/></svg>
        </div>
        <svg class="ml-11 size-6"><use href="#chromium"/></svg>
        <svg class="ml-12 size-6"><use href="#blender"/></svg>
        <svg class="ml-12 size-5"><use href="#gimp"/></svg>
        <svg class="ml-14 size-6"><use href="#xapp"/></svg>
        <div class="ml-auto flex items-center pr-2.5">
            <svg class="size-6"><use href="#thunderbird"/></svg>
            <svg class="ml-4 h-4 w-[22px]"><use href="#keyboard"/></svg>
            <span class="ml-1.5 w-[34px]">Англ</span>
            <svg class="ml-2.5 h-4 w-[18px]"><use href="#volume"/></svg>
            <svg class="ml-[18px] h-4 w-[18px]"><use href="#mail"/></svg>
            <svg class="ml-2 size-[18px]"><use href="#weather"/></svg>
            <span class="w-[32px] whitespace-nowrap">-1 °C</span>
            <time class="ml-2 whitespace-nowrap">Ср.,&nbsp; 6 февр., 16:28:38</time>
            <svg class="ml-2.5 size-4"><use href="#power"/></svg>
        </div>
    </header>

    <!-- main window -->
    <div class="flex min-h-0 flex-1 flex-col border-x border-[#a09e99]">
        <div class="flex h-7 shrink-0 items-center gap-0.5 border-t border-[#2e2d2a] bg-linear-to-b from-[#4a4944] to-[#3c3b37] pl-2.5 text-[#807d78]">
            <button class="grid size-4 place-items-center rounded-full bg-[#5f5d57] text-[#33322f]" aria-label="Закрыть"><svg class="size-2" viewBox="0 0 8 8"><path d="M1 1l6 6M7 1L1 7" stroke="currentColor" stroke-width="1.300"/></svg></button>
            <button class="grid size-4 place-items-center rounded-full bg-[#5f5d57] text-[#33322f]" aria-label="Свернуть"><svg class="size-2" viewBox="0 0 8 8"><path d="M1 4h6" stroke="currentColor" stroke-width="1.300"/></svg></button>
            <button class="grid size-4 place-items-center rounded-full bg-[#5f5d57] text-[#33322f]" aria-label="Развернуть"><svg class="size-2" viewBox="0 0 8 8"><path d="M1 1h6v6H1z" fill="none" stroke="currentColor" stroke-width="1.300"/></svg></button>
            <h1 class="ml-2.5 font-bold">*Несохранённый 1</h1>
        </div>
        <nav class="flex h-[26px] shrink-0 items-center gap-4 border-t border-[#35342f] bg-[#3c3b37] pl-2 text-[#dfdbd2]">
            <a href="#">Файл</a>
            <a href="#">Правка</a>
            <a href="#">Вид</a>
            <a href="#">Проекты</a>
            <a href="#">Справка</a>
        </nav>
        <div class="flex h-10 shrink-0 items-center pb-0.5 pl-px">
            <button class="grid size-9 place-items-center" aria-label="Создать"><svg class="size-6"><use href="#tb-new"/></svg></button>
            <button class="grid size-9 place-items-center" aria-label="Открыть"><svg class="size-6"><use href="#tb-open"/></svg></button>
            <button class="grid size-9 place-items-center" aria-label="Сохранить"><svg class="size-6"><use href="#tb-save"/></svg></button>
            <div class="mx-1.5 h-6 w-px bg-[#dcdad7]"></div>
            <button class="grid size-9 place-items-center" aria-label="Отменить"><svg class="size-6"><use href="#tb-undo"/></svg></button>
            <button class="grid w-[26px] place-items-center text-[#777]" aria-label="История отмены"><svg class="h-2 w-2.5"><use href="#down"/></svg></button>
            <button class="grid size-9 place-items-center" aria-label="Повторить"><svg class="size-6"><use href="#tb-redo"/></svg></button>
            <button class="grid w-[26px] place-items-center text-[#c8c8c6]" aria-label="История повтора"><svg class="h-2 w-2.5"><use href="#down"/></svg></button>
            <div class="mx-1.5 h-6 w-px bg-[#dcdad7]"></div>
            <button class="grid size-9 place-items-center" aria-label="Вырезать"><svg class="size-6"><use href="#tb-cut"/></svg></button>
            <button class="grid size-9 place-items-center" aria-label="Копировать"><svg class="size-6"><use href="#tb-copy"/></svg></button>
            <button class="grid size-9 place-items-center" aria-label="Вставить"><svg class="size-6"><use href="#tb-paste"/></svg></button>
            <div class="mx-1.5 h-6 w-px bg-[#dcdad7]"></div>
            <button class="grid h-[34px] w-9 place-items-center rounded border border-[#a8a6a3] bg-linear-to-b from-[#dddbd9] to-[#ececea]" aria-label="Выбор"><svg class="h-6 w-4"><use href="#cursor"/></svg></button>
            <button class="grid size-8 place-items-center" aria-label="Перемещение"><svg class="size-5"><use href="#tb-move"/></svg></button>
        </div>

        <main class="flex min-h-0 flex-1 px-0.5">
            <aside class="w-80 shrink-0 overflow-hidden border border-[#bfbbb5] p-0.5" id="palette"></aside>
            <div class="flex w-1.5 shrink-0 flex-col items-center justify-center gap-0.5">
                <i class="h-px w-1 bg-[#bbb]"></i><i class="h-px w-1 bg-[#bbb]"></i><i class="h-px w-1 bg-[#bbb]"></i>
            </div>
            <section class="min-w-0 flex-1 overflow-hidden border border-[#c9c5c0] bg-white p-3">
                <div class="relative h-[258px] w-[448px] rounded-xs border-4 border-[#f07746]">
                    <button class="size-full border border-black bg-linear-to-b from-white to-[#dedbd9]">button</button>
                    <i class="absolute top-0 left-0 size-[7px] bg-black"></i>
                    <i class="absolute top-0 right-0 size-[7px] bg-black"></i>
                    <i class="absolute bottom-0 left-0 size-[7px] bg-black"></i>
                    <i class="absolute right-0 bottom-0 size-[7px] bg-black"></i>
                </div>
            </section>

            <aside class="ml-1.5 flex w-[445px] shrink-0 flex-col">
                <input type="text" aria-label="Поиск виджетов" placeholder="&lt; поиск виджетов &gt;" class="mx-px mt-[3px] h-[26px] shrink-0 rounded border border-[#aaa6a2] bg-white px-1 italic placeholder:text-[#777]">
                <ul class="mt-0.5 h-[189px] shrink-0 border border-[#bfbbb5] bg-white text-[#3c3c3c]">
                    <li class="h-[23px] pl-[37px] leading-[23px] font-bold">Действия</li>
                    <li class="flex h-[23px] items-center font-bold"><svg class="h-2 w-2.5 text-[#666]"><use href="#down"/></svg><span class="ml-[27px]">Элементы</span></li>
                    <li class="flex h-[23px] items-center pl-2.5"><svg class="h-2 w-2.5 text-[#666]"><use href="#down"/></svg><svg class="ml-1 size-4"><use href="#window"/></svg><span class="ml-2">window1</span></li>
                    <li class="flex h-[23px] items-center bg-linear-to-b from-[#ebe9e7] to-[#dfdcda] pl-[35px]"><svg class="size-4 font-['DejaVu_Sans']"><use href="#ok"/></svg><span class="ml-2">hal_button1</span></li>
                    <li class="h-[23px] pl-[37px] leading-[23px] font-bold">Объекты</li>
                </ul>
                <div class="flex h-1.5 shrink-0 items-center justify-center gap-0.5"><i class="h-1 w-px bg-[#bbb]"></i><i class="h-1 w-px bg-[#bbb]"></i><i class="h-1 w-px bg-[#bbb]"></i></div>
                <h2 class="mb-1.5 flex h-[17px] shrink-0 items-center gap-1 whitespace-nowrap"><svg class="size-4 font-['DejaVu_Sans']"><use href="#ok"/></svg>HAL_Button: свойства - HAL_Button [hal_button1]</h2>

                <div class="z-10 -mb-px flex h-[31px] shrink-0 items-end gap-px text-[#777]">
                    <button class="h-7 w-[84px] rounded-t border border-[#c5c1bd] bg-linear-to-b from-[#eae8e6] to-[#dddbd9]">Основные</button>
                    <button class="h-7 w-[79px] rounded-t border border-[#c5c1bd] bg-linear-to-b from-[#eae8e6] to-[#dddbd9]">Упаковка</button>
                    <button class="h-[31px] w-[61px] rounded-t border border-b-0 border-[#bfbbb5] bg-linear-to-b from-white to-[#f7f7f6] text-[#3c3c3c]">Общие</button>
                    <button class="h-7 w-[73px] rounded-t border border-[#c5c1bd] bg-linear-to-b from-[#eae8e6] to-[#dddbd9]">Сигналы</button>
                    <button class="grid h-7 w-8 place-items-center rounded-t border border-[#c5c1bd] bg-linear-to-b from-[#eae8e6] to-[#dddbd9]" aria-label="Доступность"><svg class="size-5"><use href="#wheelchair"/></svg></button>
                </div>
                <div class="flex min-h-0 flex-1 rounded border border-[#bfbbb5] bg-[#f7f7f6] p-[7px]">
                    <div class="flex min-w-0 flex-1 flex-col justify-end overflow-hidden border border-[#bfbbb5] bg-[#f2f1f0]">
                        <form class="grid grid-cols-[1fr_182px] items-center gap-y-[3px] pr-[5px] pb-px pl-[9px] leading-[17px]">
                            <span aria-hidden="true"></span>
                            <button type="button" aria-label="Видимый" class="h-7 rounded border border-[#aaa6a2] bg-linear-to-b from-[#dad7d5] to-[#e6e4e2]"></button>
                            <span id="p1">Отрисовываемый<br>приложением:</span>
                            <button type="button" aria-describedby="p1" class="h-7 rounded border border-[#b2aeaa] bg-linear-to-b from-white to-[#e9e7e5]">Нет</button>
                            <span id="p2" class="font-bold">Может иметь фокус:</span>
                            <button type="button" aria-describedby="p2" class="h-7 rounded border border-[#aaa6a2] bg-linear-to-b from-[#dad7d5] to-[#e6e4e2] text-[#777]">Да</button>
                            <span id="p3">Имеет фокус:</span>
                            <button type="button" aria-describedby="p3" class="h-7 rounded border border-[#b2aeaa] bg-linear-to-b from-white to-[#e9e7e5]">Нет</button>
                            <span id="p4">Имеет фокус:</span>
                            <button type="button" aria-describedby="p4" class="h-7 rounded border border-[#b2aeaa] bg-linear-to-b from-white to-[#e9e7e5]">Нет</button>
                            <span id="p5">Выбирается по умолчанию:</span>
                            <button type="button" aria-describedby="p5" class="h-7 rounded border border-[#b2aeaa] bg-linear-to-b from-white to-[#e9e7e5]">Нет</button>
                            <span id="p6">Выбран по умолчанию:</span>
                            <button type="button" aria-describedby="p6" class="h-7 rounded border border-[#b2aeaa] bg-linear-to-b from-white to-[#e9e7e5]">Нет</button>
                            <span id="p7" class="font-bold">Действие по умолчанию:</span>
                            <button type="button" aria-describedby="p7" class="h-7 rounded border border-[#aaa6a2] bg-linear-to-b from-[#dad7d5] to-[#e6e4e2] text-[#777]">Да</button>

                            <label for="events">События:</label>
                            <div class="flex h-[100px] gap-0.5">
                                <div class="flex min-w-0 flex-1 flex-col">
                                    <input id="events" type="text" value="Структура" class="h-[25px] w-full rounded border border-[#aaa6a2] bg-white px-[3px] text-[#3c3c3c]">
                                    <div class="mt-px flex h-[59px] gap-[3px]">
                                        <div class="min-w-0 flex-1 overflow-hidden border border-[#bfbbb5] bg-white leading-[23px] whitespace-nowrap text-[#3c3c3c]">
                                            <label class="flex items-center gap-2 pl-1"><input type="checkbox" class="size-[11px] shrink-0 appearance-none rounded-xs border border-[#bbb] bg-white">Выдержка</label>
                                            <label class="flex items-center gap-2 pl-1"><input type="checkbox" class="size-[11px] shrink-0 appearance-none rounded-xs border border-[#bbb] bg-white">Движение указателя</label>
                                            <label class="flex items-center gap-2 pl-1"><input type="checkbox" class="size-[11px] shrink-0 appearance-none rounded-xs border border-[#bbb] bg-white">Подсказка на движение</label>
                                        </div>
                                        <div class="flex w-[13px] flex-col items-center rounded-full border border-[#bfbbb5] bg-[#f2f1f0]">
                                            <svg class="h-3 w-1.5 shrink-0 text-[#999]"><use href="#up"/></svg>
                                            <div class="h-8 w-[13px] shrink-0 rounded-full border border-[#aaa6a2] bg-linear-to-r from-white to-[#e4e2e0]"></div>
                                            <svg class="mt-auto h-3 w-1.5 shrink-0 text-[#666]"><use href="#down"/></svg>
                                        </div>
                                    </div>
                                    <div class="mt-[3px] mr-4 flex h-3 items-center rounded-full border border-[#bfbbb5] bg-[#f2f1f0]">
                                        <svg class="h-1.5 w-3 text-[#999]"><use href="#left"/></svg>
                                        <div class="flex h-3 w-[53px] items-center justify-center gap-0.5 rounded-full border border-[#aaa6a2] bg-linear-to-b from-white to-[#e4e2e0]"><i class="h-1 w-px bg-[#bbb]"></i><i class="h-1 w-px bg-[#bbb]"></i><i class="h-1 w-px bg-[#bbb]"></i></div>
                                        <div class="h-full flex-1 rounded-r-full border-r border-[#bfbbb5] bg-[#dedbd9]"></div>
                                        <svg class="h-1.5 w-3 text-[#666]"><use href="#right"/></svg>
                                    </div>
                                </div>
                                <button type="button" class="w-[22px] rounded border border-[#b2aeaa] bg-linear-to-r from-white to-[#e4e2e0]">…</button>
                            </div>

                            <label for="resize-events">События изменения<br>размеров:</label>
                            <div class="relative">
                                <select id="resize-events" class="block h-[30px] w-full appearance-none rounded border border-[#b2aeaa] bg-linear-to-b from-white to-[#e4e2e0] px-[5px]"><option>Нет</option></select>
                                <svg class="pointer-events-none absolute top-3 right-2 h-2 w-2.5 text-[#777]"><use href="#down"/></svg>
                            </div>
                            <span id="p8">Имеет всплывающую<br>подсказку:</span>
                            <button type="button" aria-describedby="p8" class="h-7 rounded border border-[#b2aeaa] bg-linear-to-b from-white to-[#e9e7e5]">Нет</button>
                            <span id="p9">Дважды буферизован:</span>
                            <button type="button" aria-describedby="p9" class="h-7 rounded border border-[#aaa6a2] bg-linear-to-b from-[#dad7d5] to-[#e6e4e2] text-[#777]">Да</button>
                            <label for="accel">Ускорители:</label>
                            <div class="flex gap-0.5">
                                <input id="accel" type="text" class="h-[26px] min-w-0 flex-1 rounded border border-[#aaa6a2] bg-white px-1">
                                <button type="button" class="h-7 w-[22px] rounded border border-[#b2aeaa] bg-linear-to-b from-white to-[#e4e2e0]">…</button>
                            </div>
                            <label for="border-width">Ширина границы:</label>
                            <div class="flex">
                                <input id="border-width" type="text" value="0" class="h-[26px] min-w-0 flex-1 rounded-l border border-[#aaa6a2] bg-white px-1">
                                <button type="button" class="w-[17px] rounded-r border border-l-0 border-[#b2aeaa] bg-[#e9e7e5]" aria-label="Изменить значение"></button>
                            </div>
                            <label for="resize-mode">Режим изменения размера:</label>
                            <div class="relative">
                                <select id="resize-mode" class="block h-[30px] w-full appearance-none rounded border border-[#b2aeaa] bg-linear-to-b from-white to-[#e4e2e0] px-[5px]"><option>Родитель</option></select>
                                <svg class="pointer-events-none absolute top-3 right-2 h-2 w-2.5 text-[#777]"><use href="#down"/></svg>
                            </div>
                        </form>
                    </div>
                    <div class="ml-0.5 flex w-[13px] flex-col items-center rounded-full border border-[#bfbbb5] bg-[#dedbd9]">
                        <div class="grid h-3 w-full place-items-center rounded-t-full bg-[#f2f1f0]"><svg class="h-1.5 w-2 text-[#666]"><use href="#up"/></svg></div>
                        <div class="h-[38%]"></div>
                        <div class="flex w-[13px] flex-1 flex-col items-center justify-center gap-0.5 rounded-full border border-[#aaa6a2] bg-linear-to-r from-white to-[#e4e2e0]"><i class="h-px w-1 bg-[#aaa]"></i><i class="h-px w-1 bg-[#aaa]"></i><i class="h-px w-1 bg-[#aaa]"></i></div>
                        <div class="grid h-3 w-full place-items-center rounded-b-full bg-[#f2f1f0]"><svg class="h-1.5 w-2 text-[#999]"><use href="#down"/></svg></div>
                    </div>
                </div>
                <div class="mt-2 mr-px flex shrink-0 justify-end gap-2">
                    <button class="grid size-[26px] place-items-center rounded border border-[#c9c6c3] bg-[#e9e8e6]" aria-label="Документация"><svg class="size-5"><use href="#book"/></svg></button>
                    <button class="grid size-[26px] place-items-center rounded border border-[#999] bg-linear-to-b from-[#dcdcdc] to-[#c8c8c8]" aria-label="Сбросить"><svg class="h-3 w-4"><use href="#clear"/></svg></button>
                </div>
            </aside>
        </main>
        <div class="mt-0.5 flex h-[21px] shrink-0 items-end justify-end border-t border-[#d6d3cf] p-px">
            <svg class="size-3" viewBox="0 0 12 12"><path d="M9 2.500h3M6 5.500h6M3 8.500h9M0 11.500h12" stroke="#aaa" stroke-dasharray="1 2"/></svg>
        </div>
    </div>

    <!-- window list -->
    <footer class="flex h-[25px] shrink-0 items-center border-t border-[#33322f] bg-linear-to-b from-[#5a5852] to-[#3e3d38] text-[#dfdbd2]">
        <div class="flex h-full w-10 shrink-0 items-center gap-2.5">
            <svg class="h-[22px] w-6"><use href="#desktop"/></svg>
            <span class="flex flex-col gap-0.5"><i class="h-px w-1 bg-[#2c2b28]"></i><i class="h-px w-1 bg-[#2c2b28]"></i><i class="h-px w-1 bg-[#2c2b28]"></i></span>
        </div>
        <div class="flex h-full min-w-0 flex-1" id="tasks"></div>
        <div class="ml-0.5 flex h-full shrink-0 bg-[#2e2d2b]">
            <button class="grid h-full w-7 place-items-center border border-white bg-[#f07746]" aria-label="Рабочее место 1"><svg class="size-4"><use href="#glade-orange"/></svg></button>
            <button class="h-full w-7 border-r border-[#444]" aria-label="Рабочее место 2"></button>
            <button class="h-full w-7 border-r border-[#444]" aria-label="Рабочее место 3"></button>
            <button class="h-full w-7" aria-label="Рабочее место 4"></button>
        </div>
    </footer>

    <!-- accelerator dialog -->
    <div role="dialog" aria-labelledby="dialog-title" class="absolute top-[398px] left-[432px] z-20 w-[418px] rounded-t-md border border-[#999692] bg-[#f2f1f0]">
        <div class="-mx-px -mt-px flex h-[29px] items-center gap-3 rounded-t-md bg-linear-to-b from-[#565550] to-[#3a3935] pl-3 text-[#dfdbd2]">
            <button class="grid size-4 place-items-center rounded-full border border-[#a03c14] bg-linear-to-b from-[#f58a60] to-[#e0511c] text-[#3a2a20]" aria-label="Закрыть"><svg class="size-1.5" viewBox="0 0 8 8"><path d="M1 1l6 6M7 1L1 7" stroke="currentColor" stroke-width="1.800"/></svg></button>
            <h2 id="dialog-title" class="font-bold">Выберите быструю клавишу…</h2>
        </div>
        <div class="mx-2 mt-2 flex h-[200px] gap-[3px]">
            <div class="min-w-0 flex-1 overflow-hidden border border-[#bfbbb5] bg-white">
                <table class="w-full table-fixed border-collapse text-[#3c3c3c]">
                    <thead>
                        <tr class="h-[25px] border-b border-[#bfbbb5] bg-linear-to-b from-[#f8f8f7] to-[#ebe9e7] text-left text-[#4c4c4c]">
                            <th class="w-[167px] border-r border-[#d0cdc9] pl-[3px] font-normal">Сигнал</th>
                            <th class="pl-[3px] font-normal">Клавиша ускорителя</th>
                        </tr>
                    </thead>
                    <tbody>
                        <tr class="h-[23px] rounded-xs bg-[#fce4db] outline outline-offset-[-2px] outline-[#f0946c]"><td class="border-r border-[#d8c4bb] pl-1 font-bold text-[#5c4238]">GtkButton</td><td></td></tr>
                        <tr class="h-[23px]"><td class="border-r border-[#d0cdc9] pl-4">activate</td><td class="pl-[5px] text-[#b8b8b8] italic">&lt;выберите клавишу&gt;</td></tr>
                        <tr class="h-[23px]"><td class="border-r border-[#d0cdc9] pl-4">clicked</td><td class="pl-[5px] text-[#b8b8b8] italic">&lt;выберите клавишу&gt;</td></tr>
                        <tr class="h-[23px]"><td class="border-r border-[#d0cdc9] pl-1 font-bold">GtkWidget</td><td></td></tr>
                        <tr class="h-[23px]"><td class="border-r border-[#d0cdc9] pl-4">composited-changed</td><td class="pl-[5px] text-[#b8b8b8] italic">&lt;выберите клавишу&gt;</td></tr>
                        <tr class="h-[23px]"><td class="border-r border-[#d0cdc9] pl-4">grab-focus</td><td class="pl-[5px] text-[#b8b8b8] italic">&lt;выберите клавишу&gt;</td></tr>
                        <tr class="h-[23px]"><td class="border-r border-[#d0cdc9] pl-4">move-focus</td><td class="pl-[5px] text-[#b8b8b8] italic">&lt;выберите клавишу&gt;</td></tr>
                        <tr class="h-[23px]"><td class="border-r border-[#d0cdc9] pl-4">popup-menu</td><td class="pl-[5px] text-[#b8b8b8] italic">&lt;выберите клавишу&gt;</td></tr>
                    </tbody>
                </table>
            </div>
            <div class="flex w-[13px] flex-col items-center rounded-full border border-[#bfbbb5] bg-[#dedbd9]">
                <div class="grid h-3 w-full place-items-center rounded-t-full bg-[#f2f1f0]"><svg class="h-1.5 w-2 text-[#999]"><use href="#up"/></svg></div>
                <div class="flex h-[118px] w-[13px] flex-col items-center justify-center gap-0.5 rounded-full border border-[#aaa6a2] bg-linear-to-r from-white to-[#e4e2e0]"><i class="h-px w-1 bg-[#aaa]"></i><i class="h-px w-1 bg-[#aaa]"></i><i class="h-px w-1 bg-[#aaa]"></i></div>
                <div class="mt-auto grid h-3 w-full place-items-center rounded-b-full bg-[#f2f1f0]"><svg class="h-1.5 w-2 text-[#666]"><use href="#down"/></svg></div>
            </div>
        </div>
        <div class="flex justify-end gap-2 px-2 pt-3 pb-[7px]">
            <button class="h-7 w-[88px] rounded border border-[#999] bg-linear-to-b from-[#dcdcdc] via-[#c6c6c6] to-[#cecece]">Очистить</button>
            <button class="h-7 w-[88px] rounded border border-[#999] bg-linear-to-b from-[#dcdcdc] via-[#c6c6c6] to-[#cecece]">Отменить</button>
            <button class="h-7 w-[88px] rounded border border-[#999] bg-linear-to-b from-[#dcdcdc] via-[#c6c6c6] to-[#cecece]">OK</button>
        </div>
    </div>

    <div role="tooltip" class="absolute top-[867px] right-0 z-20 rounded bg-black px-1.5 leading-[25px] whitespace-nowrap text-white">Список быстрых клавиш</div>
    <svg class="absolute top-[855px] left-[1183px] z-30 h-6 w-4"><use href="#cursor"/></svg>

    <script>
        const groups = [
            ['Действия', true, 'action-group action toggle-action radio-action recent-action'],
            ['Окна', true, 'window dialog about color-dialog file-dialog font-dialog input-dialog message-dialog recent-dialog assistant'],
            ['Контейнеры', true, 'hbox vbox grid notebook frame aspect menubar toolbar hpaned vpaned hbuttons vbuttons layout fixed eventbox expander viewport scrolled alignment'],
            ['Управление и отображение', true, 'ok on check spin radio file-button color-button font-button link scale-button volume-button image label accel-label entry hscale vscale hscroll vscroll combo combo-entry progress textview treeview iconview handle statusbar calendar list hsep vsep arrow drawing'],
            ['Сложные виджеты', false, ''],
            ['Модель дерева', false, ''],
            ['Текстовые буферы', false, ''],
            ['Различные виджеты', false, ''],
            ['Специализированные виджеты', false, ''],
            ['Упразднённые GTK+', false, ''],
            ['Gnome Media', true, 'dialog combo'],
            ['HAL Python', true, 'hbox grid led combo ok spin check on radio hscale vscale progress label hbar vbar plot meter drawing vbox vbox hal-label gear file-dialog file-button textview vbox'],
            ['EMC Actions', true, 'estop estop unplug plug play step pause pause stop gears home home estop plug play stop pause gears estop estop unplug plug open reload save save-as'],
            ['GtkSourceView', true, 'textview'],
        ];

        document.getElementById('palette').innerHTML = groups.map(([title, open, icons]) => `
            <button class="mb-0.5 flex h-[27px] w-full items-center gap-1.5 rounded border border-[#999] bg-linear-to-b from-[#dcdcdc] via-[#c4c4c4] to-[#cacaca] pl-1.5 text-[#4c4c4c]" aria-expanded="${open}">
                <svg class="h-2 w-2.5 text-[#777]"><use href="#${open ? 'down' : 'right'}"/></svg>${title}
            </button>
            ${open ? `<div class="grid grid-cols-[repeat(11,28px)] py-px">
                ${icons.split(' ').map(name => `<button class="grid size-7 items-center pl-[5px]" aria-label="${name}"><svg class="size-4 overflow-visible font-['DejaVu_Sans']"><use href="#${name}"/></svg></button>`).join('')}
            </div>` : ''}`).join('');

        const tasks = [
            ['chromium', 'GladeV…'], ['open', 'render'], ['open', '2013.02.05'], ['inkscape', 'cnc-box …'], ['gimp', 'GNU Im…'],
            ['terminal', 'nick@lts…'], ['gedit', '*Докум…'], ['desktop', 'Рабочи…'], ['app-cnc', 'cnc-box-…'], ['glade', '*Несохр…'],
        ];

        document.getElementById('tasks').innerHTML = tasks.map(([icon, title], i) => `
            <button class="flex min-w-0 flex-1 items-center gap-2 overflow-hidden border-l border-[#35342f] pl-2 whitespace-nowrap ${i === 9 ? 'bg-[#2e2d2b] text-white' : ''}">
                <svg class="size-4 shrink-0"><use href="#${icon}"/></svg>${title}
            </button>`).join('');

        // put the drawing of each icon in place of its reference
        const icons = document.getElementById('icons').content;
        document.querySelectorAll('svg > use').forEach(use => {
            const symbol = icons.querySelector(use.getAttribute('href'));
            const svg = use.parentNode;
            if (!symbol) return;
            svg.setAttribute('viewBox', symbol.getAttribute('viewBox'));
            svg.innerHTML = symbol.innerHTML;
        });
    </script>
</body>

</html>
